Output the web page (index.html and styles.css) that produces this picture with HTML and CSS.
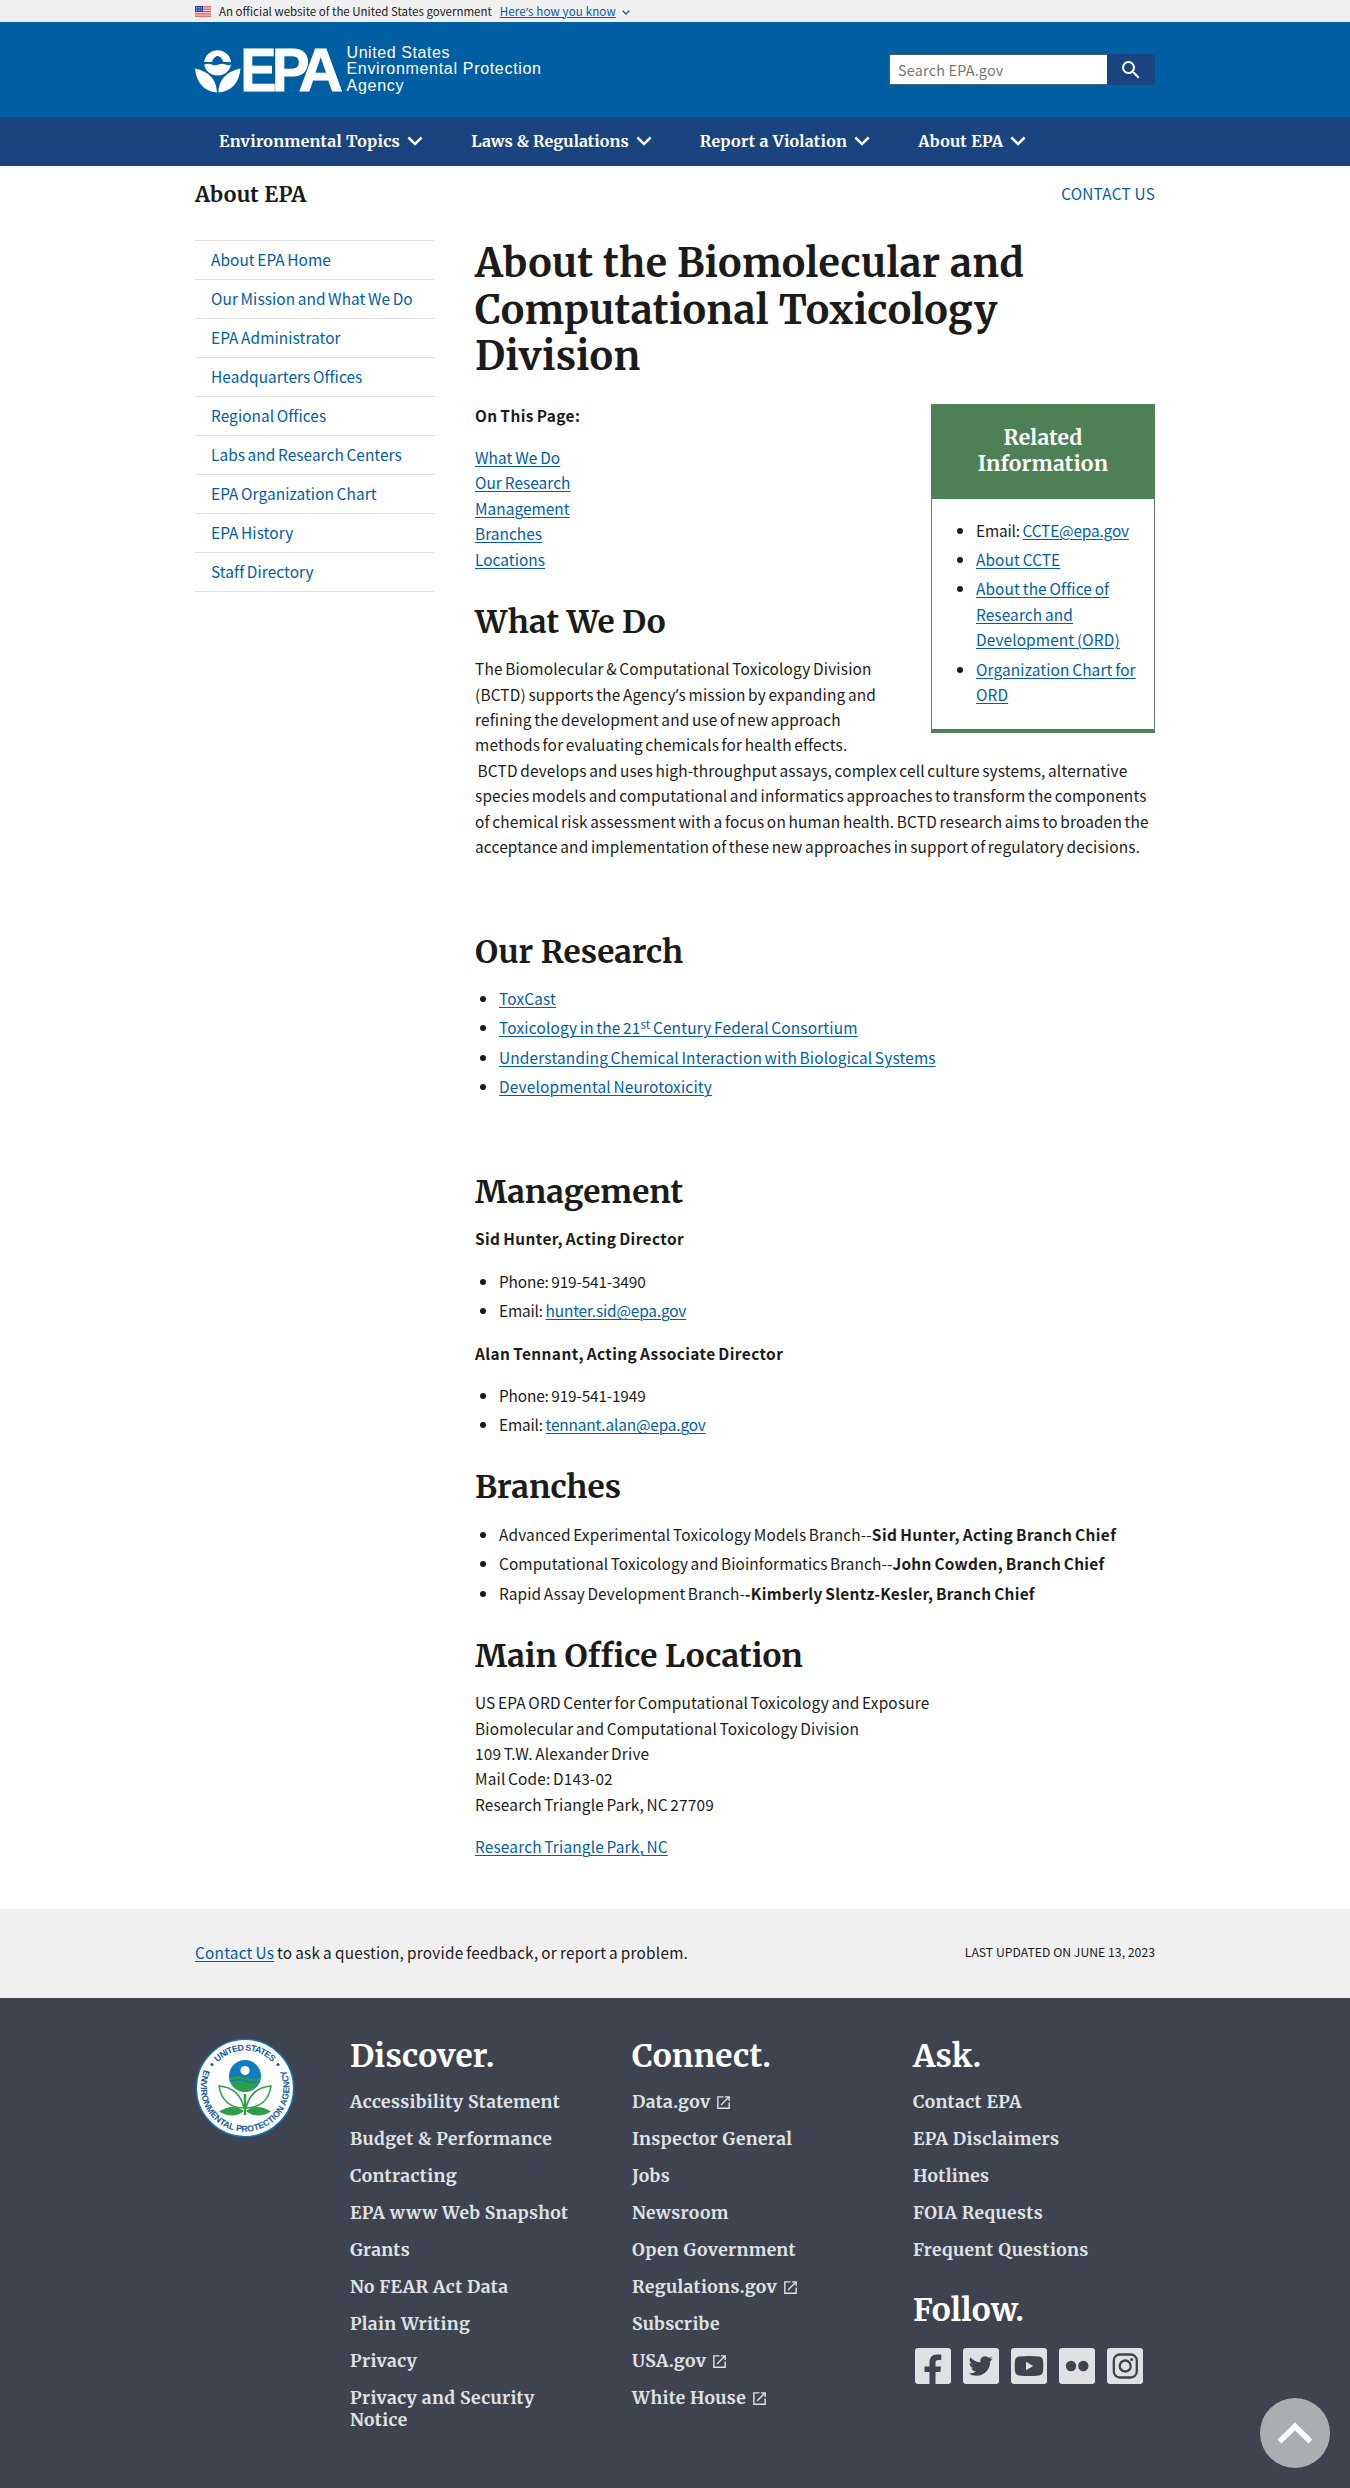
FILE: index.html
```
<!DOCTYPE html>
<html lang="en">
<head>
<meta charset="utf-8">
<title>About the Biomolecular and Computational Toxicology Division | US EPA</title>
<link rel="stylesheet" href="styles.css">
</head>
<body>
<svg class="defs" aria-hidden="true">
  <symbol id="chevron" viewBox="0 0 16 10"><path d="M1.4 1.5 8 8.1l6.6-6.6" fill="none" stroke="currentColor" stroke-width="2.5"/></symbol>
  <symbol id="launch" viewBox="0 0 24 24"><path d="M19 19H5V5h7V3H3v18h18v-9h-2v7zM14 3v2h3.6l-9.8 9.8 1.4 1.4L19 6.400V10h2V3h-7z" fill="currentColor"/></symbol>
</svg>

<div class="banner">
  <div class="container banner-inner">
    <svg class="flag" viewBox="0 0 16 11">
      <rect width="16" height="11" fill="#fff"/>
      <path d="M0 .8h16M0 3.200h16M0 5.500h16M0 7.900h16M0 10.200h16" stroke="#d8433c" stroke-width="1.300"/>
      <rect width="8" height="6" fill="#2b3a9e"/>
      <path d="M1 1.500h6M1 3h6M1 4.500h6" stroke="#fff" stroke-width=".7" stroke-dasharray=".8 .9"/>
    </svg>
    <span>An official website of the United States government</span>
    <a class="link" href="#">Here<span class="apos">’</span>s how you know</a>
    <svg class="banner-chevron"><use href="#chevron"/></svg>
  </div>
</div>

<header class="header">
  <div class="container header-inner">
    <svg class="logo" viewBox="0 0 348 52">
      <g fill="#fff">
        <path d="M9.200 16A13.500 13.500 0 0 1 36 16H28A5.200 5.200 0 1 0 17.200 16Z"/>
        <circle cx="22.600" cy="12.500" r="2.600" fill="#005ea2"/>
        <path d="M9.200 18.500q4-1.500 7.500 0t7 0 6-.2 6.300.2C35 25 29.500 29.500 22.600 29.500S10.200 25 9.200 18.500Z"/>
        <path d="M0 22.500C11 25 21.500 31 22 46.500 9 45.500 1.500 37 0 22.500ZM45.500 22.500C34.500 25 24 31 23.500 46.500 36.500 45.500 44 37 45.500 22.500Z"/>
        <g class="logo-mark">
          <text transform="translate(45.600 44.700) scale(.88 1)">E</text>
          <text transform="translate(77 44.700) scale(.92 1)">P</text>
          <text transform="translate(103.500 44.700) scale(1.010 1)">A</text>
        </g>
        <g class="logo-name">
          <text x="151.500" y="12.300" textLength="103">United States</text>
          <text x="151.500" y="28.300" textLength="194.500">Environmental Protection</text>
          <text x="151.500" y="44.700" textLength="57">Agency</text>
        </g>
      </g>
    </svg>
    <form class="search">
      <input type="text" placeholder="Search EPA.gov" aria-label="Search">
      <button type="button" aria-label="Search">
        <svg viewBox="0 0 24 24"><path d="M15.500 14h-.79l-.28-.27A6.470 6.470 0 0 0 16 9.500 6.500 6.500 0 1 0 9.500 16c1.610 0 3.090-.59 4.230-1.570l.27.28v.79l5 4.990L20.490 19l-4.990-5zm-6 0C7.010 14 5 11.990 5 9.500S7.010 5 9.500 5 14 7.010 14 9.500 11.990 14 9.500 14z" fill="#fff"/></svg>
      </button>
    </form>
  </div>
</header>

<nav class="nav">
  <ul class="container nav-list">
    <li>Environmental Topics <svg><use href="#chevron"/></svg></li>
    <li class="tight">Laws &amp; Regulations <svg><use href="#chevron"/></svg></li>
    <li>Report a Violation <svg><use href="#chevron"/></svg></li>
    <li>About EPA <svg><use href="#chevron"/></svg></li>
  </ul>
</nav>

<div class="container web-area">
  <h2 class="web-area-title">About EPA</h2>
  <a class="contact-top" href="#">CONTACT US</a>
</div>

<div class="container layout">
  <ul class="sidenav">
    <li><a href="#">About EPA Home</a></li>
    <li><a href="#">Our Mission and What We Do</a></li>
    <li><a href="#">EPA Administrator</a></li>
    <li><a href="#">Headquarters Offices</a></li>
    <li><a href="#">Regional Offices</a></li>
    <li><a href="#">Labs and Research Centers</a></li>
    <li><a href="#">EPA Organization Chart</a></li>
    <li><a href="#">EPA History</a></li>
    <li><a href="#">Staff Directory</a></li>
  </ul>

  <main class="content">
    <h1>About the Biomolecular and<br>Computational Toxicology<br>Division</h1>

    <aside class="box">
      <h2 class="box-title">Related<br>Information</h2>
      <ul class="list box-list">
        <li class="contact">Email: <a class="link" href="#">CCTE@epa.gov</a></li>
        <li><a class="link" href="#">About CCTE</a></li>
        <li><a class="link" href="#">About the Office of<br>Research and<br>Development (ORD)</a></li>
        <li><a class="link" href="#">Organization Chart for<br>ORD</a></li>
      </ul>
    </aside>

    <p><strong>On This Page:</strong></p>
    <p class="toc">
      <a class="link" href="#">What We Do</a><br>
      <a class="link" href="#">Our Research</a><br>
      <a class="link" href="#">Management</a><br>
      <a class="link" href="#">Branches</a><br>
      <a class="link" href="#">Locations</a>
    </p>

    <h2>What We Do</h2>
    <p class="lines">The Biomolecular &amp; Computational Toxicology Division<br>
      (BCTD) supports the Agency<span class="apos">’</span>s mission by expanding and<br>
      refining the development and use of new approach<br>
      methods for evaluating chemicals for health effects.<br>
      &nbsp;BCTD develops and uses high-throughput assays, complex cell culture systems, alternative<br>
      species models and computational and informatics approaches to transform the components<br>
      of chemical risk assessment with a focus on human health. BCTD research aims to broaden the<br>
      acceptance and implementation of these new approaches in support of regulatory decisions.</p>
    <p>&nbsp;</p>

    <h2>Our Research</h2>
    <ul class="list">
      <li><a class="link" href="#">ToxCast</a></li>
      <li><a class="link" href="#">Toxicology in the 21<sup>st</sup> Century Federal Consortium</a></li>
      <li><a class="link" href="#">Understanding Chemical Interaction with Biological Systems</a></li>
      <li><a class="link" href="#">Developmental Neurotoxicity</a></li>
    </ul>
    <p>&nbsp;</p>

    <h2>Management</h2>
    <p><strong>Sid Hunter, Acting Director</strong></p>
    <ul class="list">
      <li class="contact">Phone: 919-541-3490</li>
      <li class="contact">Email: <a class="link" href="#">hunter.sid@epa.gov</a></li>
    </ul>
    <p><strong>Alan Tennant, Acting Associate Director</strong></p>
    <ul class="list">
      <li class="contact">Phone: 919-541-1949</li>
      <li class="contact">Email: <a class="link" href="#">tennant.alan@epa.gov</a></li>
    </ul>

    <h2>Branches</h2>
    <ul class="list">
      <li>Advanced Experimental Toxicology Models Branch--<strong>Sid Hunter, Acting Branch Chief</strong></li>
      <li class="snug">Computational Toxicology and Bioinformatics Branch--<strong>John Cowden, Branch Chief</strong></li>
      <li class="snug">Rapid Assay Development Branch-<strong>-Kimberly Slentz-Kesler, Branch Chief</strong></li>
    </ul>

    <h2>Main Office Location</h2>
    <p>US EPA ORD Center for Computational Toxicology and Exposure<br>
      Biomolecular and Computational Toxicology Division<br>
      109 T.W. Alexander Drive<br>
      Mail Code: D143-02<br>
      Research Triangle Park, NC 27709</p>
    <p><a class="link" href="#">Research Triangle Park, NC</a></p>
  </main>
</div>

<div class="feedback">
  <div class="container feedback-inner">
    <p class="feedback-text"><a class="link" href="#">Contact Us</a> to ask a question, provide feedback, or report a problem.</p>
    <span class="updated">LAST UPDATED ON JUNE 13, 2023</span>
  </div>
</div>

<footer class="footer">
  <div class="container footer-inner">
    <svg class="seal" viewBox="0 0 100 100">
      <defs>
        <path id="arc-top" d="M12.500 50A37.500 37.500 0 0 1 87.500 50"/>
        <path id="arc-bottom" d="M11.500 27.500A44.300 44.300 0 1 0 88.500 27.500"/>
      </defs>
      <circle cx="50" cy="50" r="48.700" fill="#fff" stroke="#1470a8" stroke-width="1.600"/>
      <g class="seal-text">
        <text><textPath href="#arc-top" startOffset="50%" text-anchor="middle" textLength="61">UNITED STATES</textPath></text>
        <text><textPath href="#arc-bottom" startOffset="50%" text-anchor="middle" textLength="175">ENVIRONMENTAL PROTECTION AGENCY</textPath></text>
      </g>
      <circle cx="17" cy="26.500" r="1.500" fill="#155a96"/><circle cx="83" cy="26.500" r="1.500" fill="#155a96"/>
      <circle cx="50" cy="38" r="16" fill="#0f7dc2"/>
      <path d="M34.200 40Q42 37 50 39.500T65.800 40A16 16 0 0 1 34.200 40Z" fill="#2f9e48"/>
      <path d="M34.800 43.500Q43 40.500 50 43T65.200 43.500" fill="none" stroke="#0f7dc2" stroke-width="1.500"/>
      <circle cx="50" cy="32.500" r="4.600" fill="#fff"/>
      <path d="M50 56V77" stroke="#2f9e48" stroke-width="2.400"/>
      <g fill="#fff" stroke="#2f9e48" stroke-width="1.600"><path d="M49 70C46 57 38 49 24 48 26 62 35 70 49 70Z"/><path d="M51 70C54 57 62 49 76 48 74 62 65 70 51 70Z"/></g>
      <path d="M49 73C42 67 32 68 24 73.500 33 79 42 79 49 73ZM51 73C58 67 68 68 76 73.500 67 79 58 79 51 73Z" fill="#2f9e48"/>
    </svg>

    <section class="footer-col">
      <h2>Discover.</h2>
      <ul>
        <li>Accessibility Statement</li>
        <li>Budget &amp; Performance</li>
        <li>Contracting</li>
        <li>EPA www Web Snapshot</li>
        <li>Grants</li>
        <li>No FEAR Act Data</li>
        <li>Plain Writing</li>
        <li>Privacy</li>
        <li>Privacy and Security<br>Notice</li>
      </ul>
    </section>

    <section class="footer-col">
      <h2>Connect.</h2>
      <ul>
        <li>Data.gov <svg><use href="#launch"/></svg></li>
        <li>Inspector General</li>
        <li>Jobs</li>
        <li>Newsroom</li>
        <li>Open Government</li>
        <li>Regulations.gov <svg><use href="#launch"/></svg></li>
        <li>Subscribe</li>
        <li>USA.gov <svg><use href="#launch"/></svg></li>
        <li>White House <svg><use href="#launch"/></svg></li>
      </ul>
    </section>

    <section class="footer-col">
      <h2>Ask.</h2>
      <ul>
        <li>Contact EPA</li>
        <li>EPA Disclaimers</li>
        <li>Hotlines</li>
        <li>FOIA Requests</li>
        <li>Frequent Questions</li>
      </ul>
      <h2 class="follow">Follow.</h2>
      <div class="social">
        <svg viewBox="0 0 36 36"><rect width="36" height="36" rx="3"/><path class="ink" d="M14.500 36V24H9.500V18.500h5V14.500C14.500 9.500 17.200 6.500 22 6.500h4.300V12h-3c-2 0-2.800.9-2.800 2.600v3.900H26l-.7 5.500h-4.800V36Z"/></svg>
        <svg viewBox="0 0 36 36"><rect width="36" height="36" rx="3"/><path class="ink" transform="translate(5.700 6)" d="M23.953 4.570a10 10 0 01-2.825.775 4.958 4.958 0 002.163-2.723c-.951.555-2.005.959-3.127 1.184a4.920 4.920 0 00-8.384 4.482C7.690 8.095 4.067 6.130 1.640 3.162a4.822 4.822 0 00-.666 2.475c0 1.710.87 3.213 2.188 4.096a4.904 4.904 0 01-2.228-.616v.06a4.923 4.923 0 003.946 4.827 4.996 4.996 0 01-2.212.085 4.936 4.936 0 004.604 3.417 9.867 9.867 0 01-6.102 2.105c-.39 0-.779-.023-1.170-.067a13.995 13.995 0 007.557 2.209c9.053 0 13.998-7.496 13.998-13.985 0-.21 0-.42-.015-.63A9.935 9.935 0 0024 4.590z"/></svg>
        <svg viewBox="0 0 36 36"><rect width="36" height="36" rx="3"/><path class="ink" d="M8 8.500q10-1.200 20 0 3.600.4 4 4 .6 5.500 0 11-.4 3.600-4 4-10 1.200-20 0-3.600-.4-4-4-.6-5.500 0-11 .4-3.600 4-4Z"/><path d="M15 13.800 22.200 18 15 22.200Z"/></svg>
        <svg viewBox="0 0 36 36"><rect width="36" height="36" rx="3"/><circle class="ink" cx="12" cy="18" r="5.200"/><circle class="ink" cx="24.300" cy="18" r="5.200"/></svg>
        <svg viewBox="0 0 36 36"><rect width="36" height="36" rx="3"/><rect class="line" x="6.800" y="6.500" width="23" height="23" rx="6"/><circle class="line" cx="18.200" cy="18" r="5.500"/><circle class="ink" cx="24.700" cy="11.400" r="1.500"/></svg>
      </div>
    </section>
  </div>
</footer>

<a class="back-to-top" href="#" aria-label="Back to top"><svg viewBox="0 0 36 22"><path d="M2.500 19.500 18 4.500l15.500 15" fill="none" stroke="#fff" stroke-width="5.600"/></svg></a>
</body>
</html>
```
FILE: styles.css
```
* { box-sizing: border-box; }
body {
  margin: 0;
  background: #fff;
  color: #1b1b1b;
  font: 15.3px/25.44px "Noto Sans CJK SC", "Noto Sans", sans-serif;
  letter-spacing: .12px;
}
a { color: #005ea2; text-decoration: none; }
.link { text-decoration: underline; text-decoration-thickness: 1px; text-underline-offset: 2px; }
.apos { font-family: "Noto Sans", sans-serif; line-height: 1; }
ul { list-style: none; margin: 0; padding: 0; }
h1, h2 { font-family: "Merriweather", "Noto Serif", "DejaVu Serif", serif; font-weight: 700; letter-spacing: 0; }
sup { font-size: 75%; line-height: 0; position: relative; top: -.5em; vertical-align: baseline; }
.defs { display: block; width: 0; height: 0; }
.container { width: 960px; margin: 0 auto; }

.banner { background: #f0f0f0; font-size: 11.5px; line-height: 22px; height: 22px; letter-spacing: 0; }
.banner-inner { display: flex; align-items: center; }
.flag { width: 16px; height: 11px; margin-right: 8px; }
.banner .link { margin-left: 8px; letter-spacing: .15px; text-underline-offset: 1px; }
.banner-chevron { width: 8px; height: 5px; margin: 3px 0 0 6px; color: #005ea2; }

.header { background: #005ea2; height: 95px; }
.header-inner { display: flex; justify-content: space-between; align-items: flex-start; }
.logo { width: 348px; height: 52px; margin-top: 24px; overflow: visible; }
.logo-mark { font: bold 61px "Liberation Sans", Arial, sans-serif; stroke: #fff; stroke-width: 1; letter-spacing: 0; }
.logo-name { font: 16px "Liberation Sans", Arial, sans-serif; letter-spacing: 0; }
.search { display: flex; margin-top: 32px; }
.search input {
  width: 218px; height: 31px; padding: 0 8px; border: 1px solid #565c65; border-right: 0; border-radius: 0;
  font: 14.4px "Noto Sans CJK SC", "Noto Sans", sans-serif; letter-spacing: .2px; background: #fff;
}
.search input::placeholder { color: #757575; }
.search button {
  display: flex; align-items: center; justify-content: center; width: 48px; height: 31px; padding: 0;
  border: 0; border-radius: 0 4px 4px 0; background: #1a4480;
}
.search button svg { width: 24px; height: 24px; }

.nav { background: #1a4480; height: 49px; color: #fff; }
.nav-list { display: flex; gap: 48px; padding-left: 24px; }
.nav-list li { display: flex; align-items: center; gap: 7px; height: 48px; font: bold 16px "Merriweather", "Noto Serif", serif; letter-spacing: .28px; }
.nav-list .tight { letter-spacing: .08px; }
.nav-list svg { width: 16px; height: 10px; }

.web-area { display: flex; justify-content: space-between; align-items: center; height: 74px; padding-bottom: 17px; }
.web-area-title { margin: 0; font-size: 21.2px; line-height: 28px; letter-spacing: .25px; }
.contact-top { padding-bottom: 2px; letter-spacing: .25px; }

.layout { display: grid; grid-template-columns: 240px 680px; column-gap: 40px; align-items: start; height: 1669px; }
.sidenav { border-bottom: 1px solid #dfe1e2; }
.sidenav li { height: 39px; padding-left: 16px; border-top: 1px solid #dfe1e2; font-size: 15.4px; line-height: 36.5px; letter-spacing: .08px; word-spacing: -1px; }

.content { font-size: 15.4px; letter-spacing: .18px; word-spacing: -1.1px; }
.content h1, .content h2 { word-spacing: 0; }
.content h1 { margin: 0 0 23px; font-size: 39.4px; line-height: 46.5px; letter-spacing: .32px; }
.content h2 { margin: 31.6px 0 14.9px; font-size: 31.6px; line-height: 37.5px; letter-spacing: .05px; }
.content p { margin: 0 0 17px; }
.content strong { letter-spacing: .42px; }
.content .snug, .content .snug strong { letter-spacing: .1px; }
.content .snug strong { letter-spacing: .3px; }
.content .contact { letter-spacing: -.16px; word-spacing: -.6px; }
.content .toc { letter-spacing: .05px; word-spacing: -.6px; }
.lines { white-space: nowrap; }
.list { margin: 0 0 17px; padding-left: 24px; list-style: disc; }
.list li { margin-bottom: 4px; }
.list li:last-child { margin-bottom: 0; }

.box { float: right; width: 224px; height: 329px; margin-top: 1px; border: 1px solid #6b7a70; border-bottom: 4px solid #4d8055; border-top: 0; }
.content .box-title {
  display: flex; align-items: center; justify-content: center; height: 95px; margin: 0 -1px;
  background: #4d8055; color: #fff; font-size: 21.1px; line-height: 26.5px; letter-spacing: .2px; text-align: center;
}
.box-list { padding: 19px 0 0 44px; letter-spacing: .12px; word-spacing: -.8px; }

.feedback { background: #f0f0f0; }
.feedback-inner { display: flex; justify-content: space-between; align-items: center; height: 89px; padding-bottom: 1px; }
.feedback-text { margin: 0; letter-spacing: .26px; word-spacing: -.8px; }
.updated { font-size: 12.2px; letter-spacing: .03px; }

.footer { background: #3f434f; height: 490px; color: #dfe1e2; }
.footer-inner { display: grid; grid-template-columns: 155px 282px 281px 242px; padding-top: 40px; }
.seal { width: 100px; height: 100px; }
.seal-text { font: bold 8.8px "Liberation Sans", Arial, sans-serif; fill: #155a96; letter-spacing: 0; }
.footer-col h2 { margin: 0 0 15px; color: #fff; font-size: 31.7px; line-height: 37.5px; letter-spacing: .2px; }
.footer-col li { margin-bottom: 15px; font: bold 17.5px/22px "Merriweather", "Noto Serif", serif; letter-spacing: .36px; }
.footer-col li svg { width: 17px; height: 17px; vertical-align: -3.5px; }
.footer-col .follow { margin: 31px 0 19px; }
.social { display: flex; gap: 12px; padding-left: 2px; }
.social svg { width: 36px; height: 36px; fill: #dfe1e2; }
.social .ink { fill: #3f434f; }
.social .line { fill: none; stroke: #3f434f; stroke-width: 2.3; }

.back-to-top {
  position: fixed; right: 20px; bottom: 20px; width: 70px; height: 70px; border-radius: 50%;
  display: flex; align-items: center; justify-content: center; background: #a9aeb1;
}
.back-to-top svg { width: 36px; height: 22px; }
```
